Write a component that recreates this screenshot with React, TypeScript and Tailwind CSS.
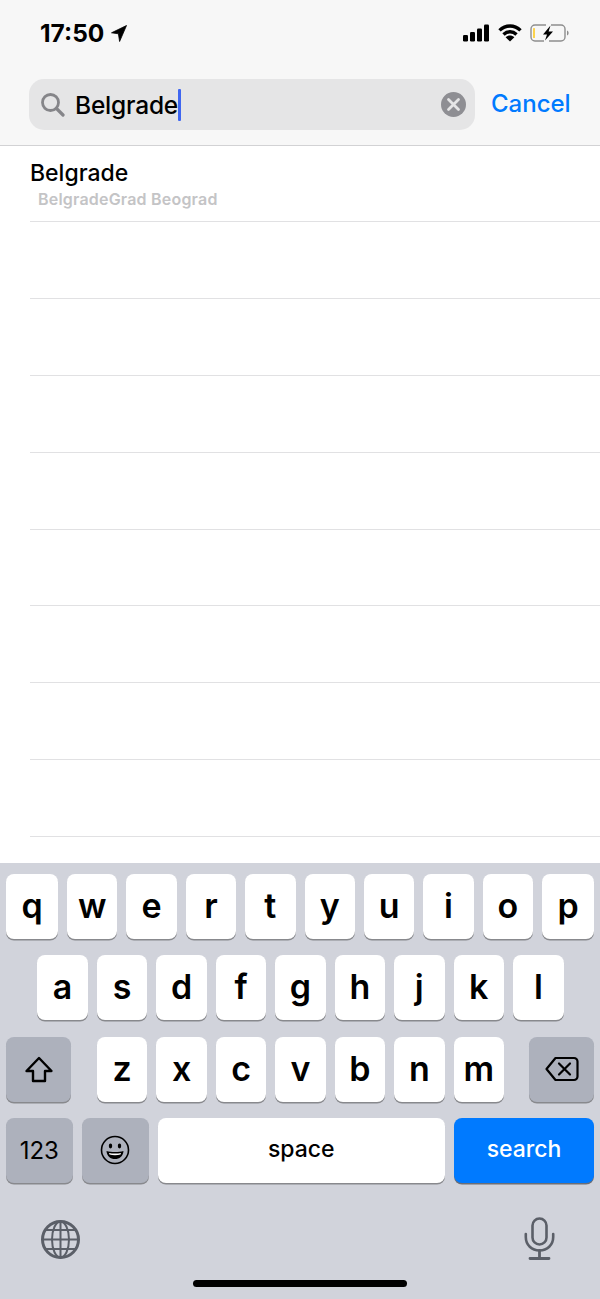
import React from "react";

const font = { fontFamily: "Inter, 'Liberation Sans', sans-serif" };

function Key({ label, className = "flex-1" }: { label: string; className?: string }) {
  return (
    <div className={`flex h-[65px] items-center justify-center rounded-[8px] bg-white pb-[2px] text-[34px] font-semibold text-black shadow-[0_1.5px_0_#88898d] ${className}`}>
      {label}
    </div>
  );
}

function StatusBar() {
  return (
    <div className="flex h-[66px] items-start justify-between pl-[40px] pr-[31px] pt-[18px]">
      <div className="flex items-center gap-[7px]">
        <span className="text-[24.5px] font-bold leading-[30px] text-black">17:50</span>
        <svg width="16" height="17" viewBox="0 0 16 17">
          <path d="M15.5 0.5 L0.5 7.8 L7.4 8.8 L8.6 16.5 Z" fill="#000" stroke="#000" strokeWidth="0.8" strokeLinejoin="round" />
        </svg>
      </div>
      <div className="flex items-center gap-[8px] pt-[6px]">
        <svg width="27" height="18" viewBox="0 0 27 18">
          <rect x="0" y="11" width="5" height="6.5" rx="1.2" fill="#000" />
          <rect x="7" y="8" width="5" height="9.5" rx="1.2" fill="#000" />
          <rect x="14" y="4.5" width="5" height="13" rx="1.2" fill="#000" />
          <rect x="21" y="0.5" width="5" height="17" rx="1.2" fill="#000" />
        </svg>
        <svg width="24" height="18" viewBox="0 0 24 18">
          <path d="M1.5 6.4 C7.5 0.6 16.5 0.6 22.5 6.4" fill="none" stroke="#000" strokeWidth="3.4" />
          <path d="M5.5 10.4 C9.3 6.8 14.7 6.8 18.5 10.4" fill="none" stroke="#000" strokeWidth="3.4" />
          <path d="M12 17.5 L7.6 13.2 C10.2 11 13.8 11 16.4 13.2 Z" fill="#000" />
        </svg>
        <svg width="39" height="18" viewBox="0 0 39 18">
          <path d="M16 1 H5 A4 4 0 0 0 1 5 V13 A4 4 0 0 0 5 17 H14" fill="none" stroke="#8e8e8e" strokeWidth="1.4" />
          <path d="M21 1 H31 A4 4 0 0 1 35 5 V13 A4 4 0 0 1 31 17 H19" fill="none" stroke="#8e8e8e" strokeWidth="1.4" />
          <path d="M37 6.5 C38.2 7 38.6 8 38.6 9 C38.6 10 38.2 11 37 11.5 Z" fill="#8e8e8e" />
          <rect x="3" y="4" width="2" height="10" rx="0.6" fill="#fcd34d" />
          <path d="M20.5 1.5 L13 10.5 H17 L15 16.5 L23 7.5 H18.6 Z" fill="#000" />
        </svg>
      </div>
    </div>
  );
}

function SearchBar() {
  return (
    <div className="flex h-[79px] items-start pl-[29px] pt-[13px]">
      <div className="flex h-[51px] w-[446px] shrink-0 items-center rounded-[15px] bg-[#e5e5e6] pl-[11px] pr-[9px]">
        <svg width="25" height="25" viewBox="0 0 25 25" className="mr-[10px] shrink-0">
          <circle cx="10.5" cy="10.5" r="8" fill="none" stroke="#858589" strokeWidth="2.8" />
          <path d="M16.5 16.5 L23 23" stroke="#858589" strokeWidth="3.2" strokeLinecap="round" />
        </svg>
        <span className="text-[24.5px] font-medium leading-[30px] tracking-[-0.2px] text-black">Belgrade</span>
        <div className="h-[32px] w-[3px] rounded-[1px] bg-[#3f66f0]" />
        <svg width="25" height="25" viewBox="0 0 25 25" className="ml-auto shrink-0">
          <circle cx="12.5" cy="12.5" r="12.5" fill="#8e8e93" />
          <path d="M7.5 7.5 L17.5 17.5 M17.5 7.5 L7.5 17.5" stroke="#e5e5e6" strokeWidth="2.8" strokeLinecap="round" />
        </svg>
      </div>
      <span className="ml-[16px] pt-[10px] text-[24px] font-medium leading-[30px] text-[#007aff]">Cancel</span>
    </div>
  );
}

function Results() {
  return (
    <div className="flex-1 overflow-hidden bg-white pl-[30px]">
      <div className="h-[76px] border-b border-[#e1e1e3] pt-[13px]">
        <div className="text-[23px] font-medium leading-[28px] text-black">Belgrade</div>
        <div className="pl-[8px] pt-[2px] text-[16px] font-semibold leading-[20px] tracking-[0.2px] text-[#c4c4c6]">BelgradeGrad Beograd</div>
      </div>
      {[0, 1, 2, 3, 4, 5, 6, 7].map((i) => (
        <div key={i} className="h-[76.9px] border-b border-[#e1e1e3]" />
      ))}
    </div>
  );
}

function Keyboard() {
  const grayKey = "flex h-[65px] items-center justify-center rounded-[8px] bg-[#adb1bc] shadow-[0_1.5px_0_#88898d]";
  return (
    <div className="flex h-[436px] flex-col gap-[16.3px] bg-[#d1d3db] px-[6px] pt-[11px]">
      <div className="flex gap-[9px]">
        {"qwertyuiop".split("").map((k) => (
          <Key key={k} label={k} className={k === "q" || k === "p" ? "w-[52px] shrink-0" : "flex-1"} />
        ))}
      </div>
      <div className="flex gap-[9px] pl-[31px] pr-[30px]">
        {"asdfghjkl".split("").map((k) => (
          <Key key={k} label={k} className={k === "a" || k === "l" ? "w-[51px] shrink-0" : "flex-1"} />
        ))}
      </div>
      <div className="flex">
        <div className={`${grayKey} w-[65px]`}>
          <svg width="30" height="27" viewBox="0 0 30 27">
            <path d="M15 2 L27.5 15 H21 V25 H9 V15 H2.5 Z" fill="none" stroke="#000" strokeWidth="2.4" strokeLinejoin="round" />
          </svg>
        </div>
        <div className="ml-[26px] mr-[25px] flex flex-1 gap-[9px]">
          {"zxcvbnm".split("").map((k) => <Key key={k} label={k} />)}
        </div>
        <div className={`${grayKey} w-[65px]`}>
          <svg width="34" height="26" viewBox="0 0 34 26">
            <path d="M10.5 2 H29 A3.5 3.5 0 0 1 32.5 5.5 V20.5 A3.5 3.5 0 0 1 29 24 H10.5 L1.5 13 Z" fill="none" stroke="#000" strokeWidth="2.2" strokeLinejoin="round" />
            <path d="M14 7.5 L25 18.5 M25 7.5 L14 18.5" stroke="#000" strokeWidth="2.2" strokeLinecap="round" />
          </svg>
        </div>
      </div>
      <div className="flex gap-[9px]">
        <div className={`${grayKey} w-[66.5px] pt-[2px] text-[24px] font-normal text-black`}>123</div>
        <div className={`${grayKey} w-[67px]`}>
          <svg width="30" height="30" viewBox="0 0 30 30">
            <circle cx="15" cy="15" r="13.5" fill="none" stroke="#000" strokeWidth="1.6" />
            <ellipse cx="10.5" cy="11" rx="1.7" ry="2.4" fill="#000" />
            <ellipse cx="19.5" cy="11" rx="1.7" ry="2.4" fill="#000" />
            <path d="M6.5 16 C11 17.3 19 17.3 23.5 16 C23 21.5 19.5 24 15 24 C10.5 24 7 21.5 6.5 16 Z" fill="#000" />
            <path d="M9 18 C12.5 18.8 17.5 18.8 21 18 L20.5 19.6 C17.5 20.3 12.5 20.3 9.5 19.6 Z" fill="#fff" />
          </svg>
        </div>
        <div className="flex h-[65px] flex-1 items-center justify-center rounded-[8px] bg-white pb-[2px] text-[23px] font-medium text-black shadow-[0_1.5px_0_#88898d]">space</div>
        <div className="flex h-[65px] w-[140px] items-center justify-center rounded-[8px] bg-[#007aff] pb-[2px] text-[23px] font-medium text-white shadow-[0_1.5px_0_#6b6e76]">search</div>
      </div>
      <div className="relative flex flex-1 items-start justify-between pl-[35px] pr-[39px] pt-[21px]">
        <svg width="39" height="39" viewBox="0 0 39 39">
          <g fill="none" stroke="#5b5f68" strokeWidth="2">
            <circle cx="19.5" cy="19.5" r="18" strokeWidth="3" />
            <ellipse cx="19.5" cy="19.5" rx="8.5" ry="18" />
            <path d="M19.5 1.5 V37.5 M1.5 19.5 H37.5 M4.5 10 H34.5 M4.5 29 H34.5" />
          </g>
        </svg>
        <svg width="31" height="44" viewBox="0 0 31 44" className="-mt-[3px]">
          <rect x="8.5" y="1.5" width="14" height="26" rx="7" fill="none" stroke="#5b5f68" strokeWidth="2.6" />
          <path d="M1.8 17 V20 C1.8 28 7.8 33.5 15.5 33.5 C23.2 33.5 29.2 28 29.2 20 V17" fill="none" stroke="#5b5f68" strokeWidth="2.6" strokeLinecap="round" />
          <path d="M15.5 33.5 V41 M6 41.5 H25" stroke="#5b5f68" strokeWidth="2.8" strokeLinecap="round" />
        </svg>
        <div className="absolute bottom-[12px] left-[187px] h-[7px] w-[214px] rounded-full bg-black" />
      </div>
    </div>
  );
}

export default function App() {
  return (
    <div className="flex h-[1299px] w-[600px] flex-col overflow-hidden bg-white" style={font}>
      <div className="h-[146px] shrink-0 border-b border-[#d2d2d4] bg-[#f7f7f7]">
        <StatusBar />
        <SearchBar />
      </div>
      <Results />
      <Keyboard />
    </div>
  );
}
